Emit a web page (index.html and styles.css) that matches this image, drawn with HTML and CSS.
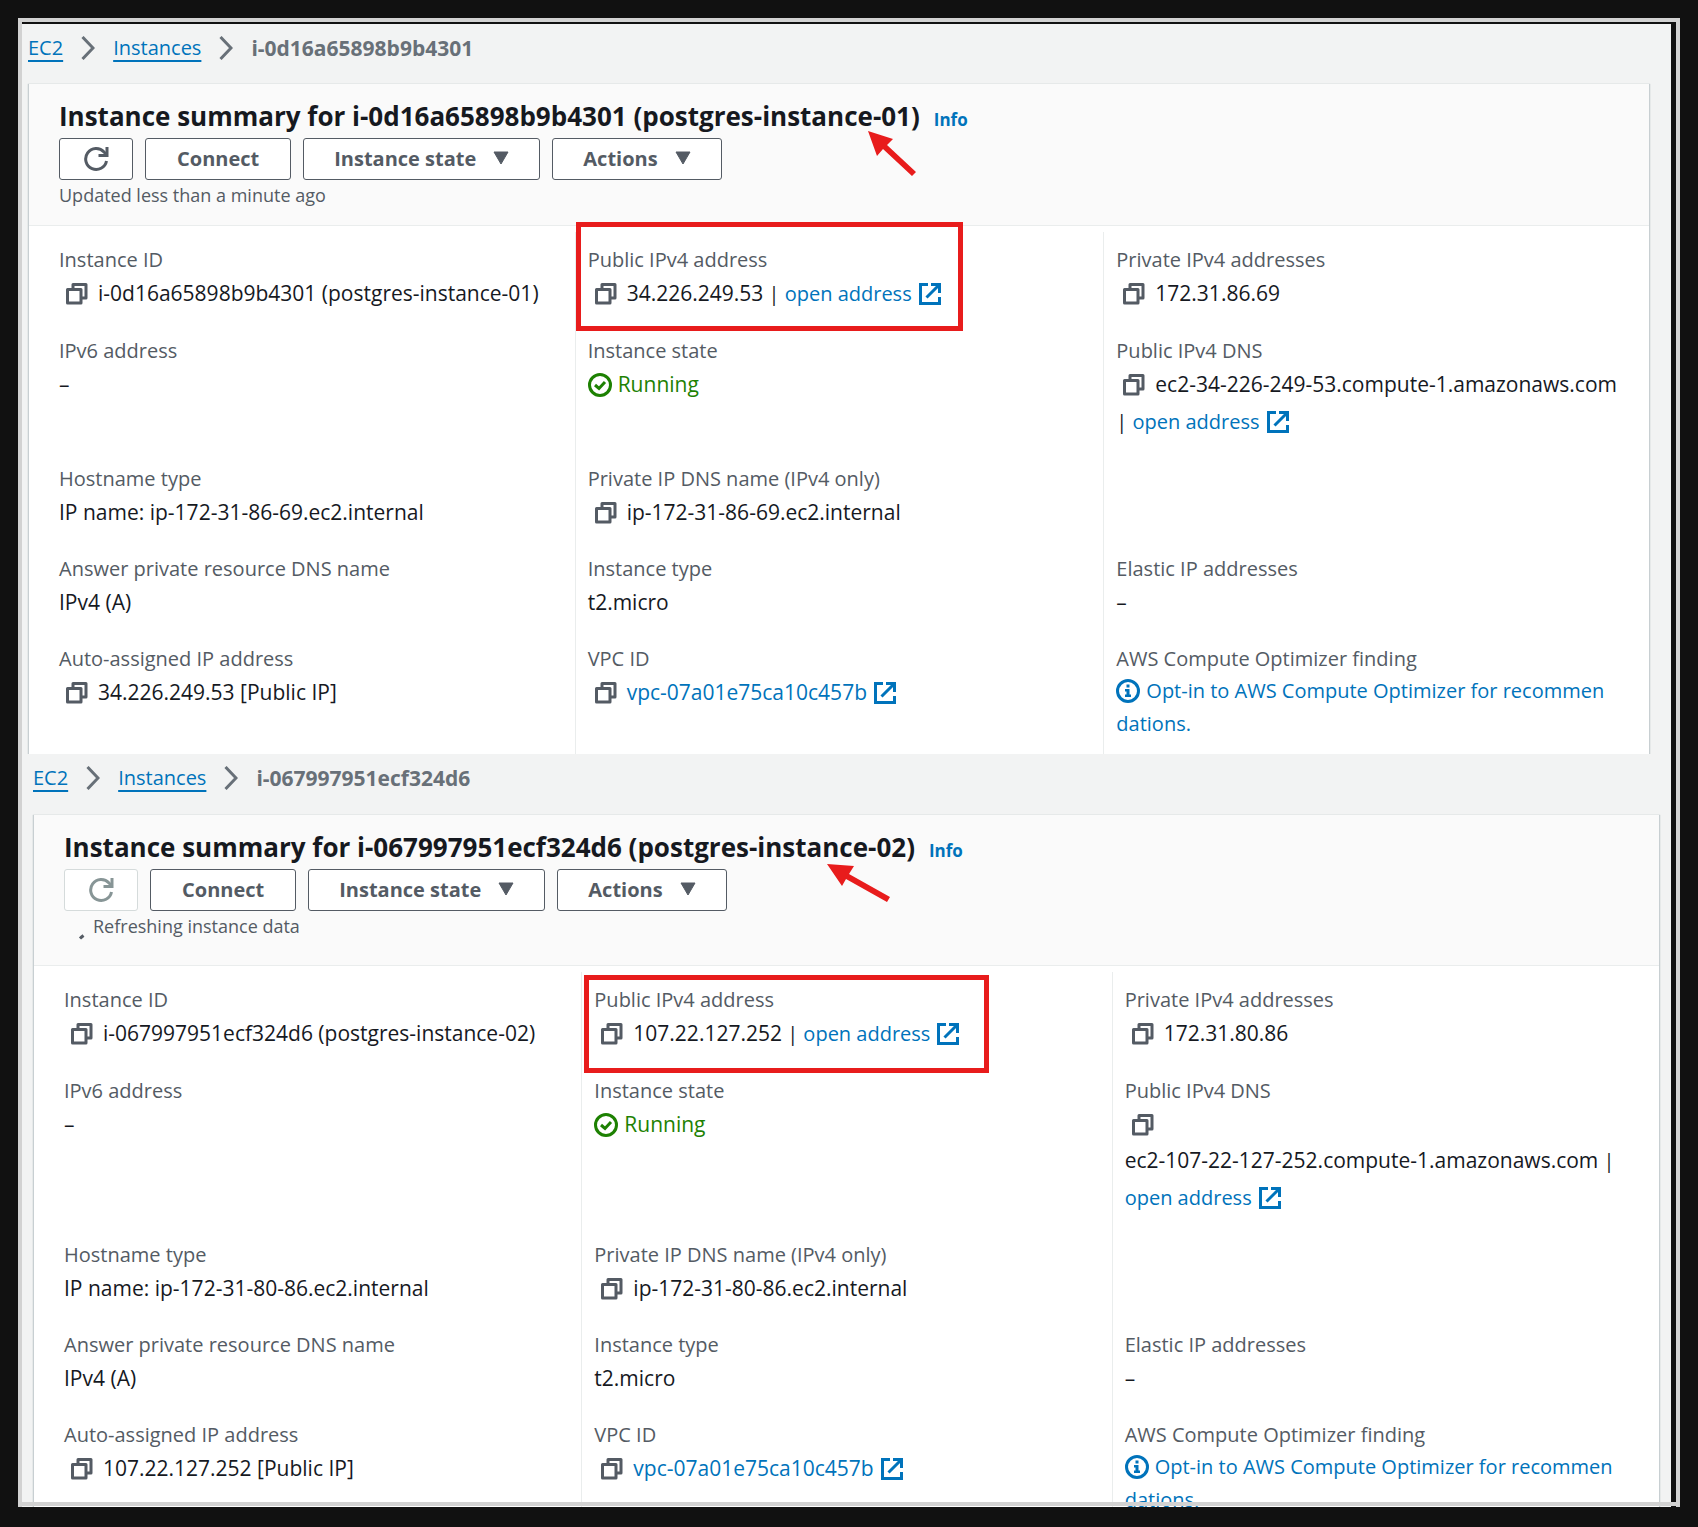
FILE: index.html
```html
<!DOCTYPE html>
<html lang="en">
<head>
<meta charset="utf-8">
<title>EC2 instance summaries</title>
<link rel="stylesheet" href="styles.css">
</head>
<body>
<svg class="sprite" aria-hidden="true">
  <symbol id="copy" viewBox="0 0 22 22"><path d="M1.5 6.5h13.5v13.5h-13.5zM7 6.5V1.5H20V15H15" fill="none" stroke="currentColor" stroke-width="3" stroke-linejoin="round"/></symbol>
  <symbol id="external" viewBox="0 0 22 22"><path d="M9 1.5H1.5V20.5H20.5V14M12 1.5H20.5V10M20 2L7.5 14.5" fill="none" stroke="currentColor" stroke-width="3"/></symbol>
  <symbol id="check" viewBox="0 0 24 24"><circle cx="12" cy="12" r="10.5" fill="none" stroke="currentColor" stroke-width="3"/><path d="M7 12l4 3.500 6-6.500" fill="none" stroke="currentColor" stroke-width="3"/></symbol>
  <symbol id="info" viewBox="0 0 24 24"><circle cx="12" cy="12" r="10.500" fill="none" stroke="currentColor" stroke-width="3"/><path d="M10.500 5.500h3v3h-3zM9 10h4.500v5.500H15V18H9v-2.500h1.500v-3H9z" fill="currentColor"/></symbol>
  <symbol id="refresh" viewBox="0 0 26 26"><path d="M23.500 15A10.500 10.500 0 1 1 21 6L23.500 8.500" fill="none" stroke="currentColor" stroke-width="3"/><path d="M24 1V9.500H15.500" fill="none" stroke="currentColor" stroke-width="3"/></symbol>
  <symbol id="chevron" viewBox="0 0 14 24"><path d="M1.500 1L12 12L1.500 23" fill="none" stroke="currentColor" stroke-width="3"/></symbol>
  <symbol id="caret" viewBox="0 0 16 14"><path d="M1 1H15L8 13z" fill="currentColor" stroke="currentColor" stroke-linejoin="round"/></symbol>
</svg>
<main class="frame">
  <section class="screen">
    <nav class="crumbs" aria-label="Breadcrumb">
      <a href="#">EC2</a>
      <svg class="chevron"><use href="#chevron"/></svg>
      <a href="#">Instances</a>
      <svg class="chevron"><use href="#chevron"/></svg>
      <span class="current">i-0d16a65898b9b4301</span>
    </nav>
    <article class="card">
      <header class="head">
        <div class="title"><h1>Instance summary for i-0d16a65898b9b4301 (postgres-instance-01)</h1><a href="#">Info</a></div>
        <div class="actions">
          <button class="btn icon-only" aria-label="Refresh"><svg class="refresh"><use href="#refresh"/></svg></button>
          <button class="btn connect">Connect</button>
          <button class="btn">Instance state <svg class="caret"><use href="#caret"/></svg></button>
          <button class="btn">Actions <svg class="caret"><use href="#caret"/></svg></button>
        </div>
        <p class="status">Updated less than a minute ago</p>
        <svg class="arrow arrow-one" viewBox="0 0 50 46"><path d="M0 0L25 8L19 14L48 41L44 45L15 18L9 25z" fill="#e81c1c"/></svg>
      </header>
      <dl class="details">
        <div class="cell"><dt>Instance ID</dt><dd><button class="copy" aria-label="Copy"><svg><use href="#copy"/></svg></button>i-0d16a65898b9b4301 (postgres-instance-01)</dd></div>
        <div class="cell"><dt>Public IPv4 address</dt><dd><button class="copy" aria-label="Copy"><svg><use href="#copy"/></svg></button>34.226.249.53<span class="bar"> | </span><a class="open" href="#">open address<svg class="ext"><use href="#external"/></svg></a></dd><span class="mark mark-one"></span></div>
        <div class="cell"><dt>Private IPv4 addresses</dt><dd><button class="copy" aria-label="Copy"><svg><use href="#copy"/></svg></button>172.31.86.69</dd></div>
        <div class="cell"><dt>IPv6 address</dt><dd>–</dd></div>
        <div class="cell"><dt>Instance state</dt><dd class="running"><svg class="state"><use href="#check"/></svg>Running</dd></div>
        <div class="cell"><dt>Public IPv4 DNS</dt><dd><button class="copy" aria-label="Copy"><svg><use href="#copy"/></svg></button><span class="host">ec2-34-226-249-53.compute-1.amazonaws.com</span><span class="bar"> | </span><a class="open" href="#">open address<svg class="ext"><use href="#external"/></svg></a></dd></div>
        <div class="cell"><dt>Hostname type</dt><dd>IP name: ip-172-31-86-69.ec2.internal</dd></div>
        <div class="cell"><dt>Private IP DNS name (IPv4 only)</dt><dd><button class="copy" aria-label="Copy"><svg><use href="#copy"/></svg></button>ip-172-31-86-69.ec2.internal</dd></div>
        <div class="cell"></div>
        <div class="cell"><dt>Answer private resource DNS name</dt><dd>IPv4 (A)</dd></div>
        <div class="cell"><dt>Instance type</dt><dd>t2.micro</dd></div>
        <div class="cell"><dt>Elastic IP addresses</dt><dd>–</dd></div>
        <div class="cell last"><dt>Auto-assigned IP address</dt><dd><button class="copy" aria-label="Copy"><svg><use href="#copy"/></svg></button>34.226.249.53 [Public IP]</dd></div>
        <div class="cell last"><dt>VPC ID</dt><dd><button class="copy" aria-label="Copy"><svg><use href="#copy"/></svg></button><a href="#">vpc-07a01e75ca10c457b<svg class="ext"><use href="#external"/></svg></a></dd></div>
        <div class="cell last"><dt>AWS Compute Optimizer finding</dt><dd class="finding"><a href="#"><svg class="state"><use href="#info"/></svg>Opt-in to AWS Compute Optimizer for recommen<wbr>dations.</a></dd></div>
      </dl>
    </article>
  </section>
  <section class="screen second">
    <nav class="crumbs" aria-label="Breadcrumb">
      <a href="#">EC2</a>
      <svg class="chevron"><use href="#chevron"/></svg>
      <a href="#">Instances</a>
      <svg class="chevron"><use href="#chevron"/></svg>
      <span class="current">i-067997951ecf324d6</span>
    </nav>
    <article class="card">
      <header class="head">
        <div class="title"><h1>Instance summary for i-067997951ecf324d6 (postgres-instance-02)</h1><a href="#">Info</a></div>
        <div class="actions">
          <button class="btn icon-only" aria-label="Refresh" disabled><svg class="refresh"><use href="#refresh"/></svg></button>
          <button class="btn connect">Connect</button>
          <button class="btn">Instance state <svg class="caret"><use href="#caret"/></svg></button>
          <button class="btn">Actions <svg class="caret"><use href="#caret"/></svg></button>
        </div>
        <p class="status"><svg class="spinner" viewBox="0 0 29 29"><path d="M16 26.500Q17.500 25 19.500 23.500" fill="none" stroke="currentColor" stroke-width="3"/></svg>Refreshing instance data</p>
        <svg class="arrow arrow-two" viewBox="0 0 65 38"><path d="M0 0L27 2L22 10L63 33L60 38L19 15L15 22z" fill="#e81c1c"/></svg>
      </header>
      <dl class="details">
        <div class="cell"><dt>Instance ID</dt><dd><button class="copy" aria-label="Copy"><svg><use href="#copy"/></svg></button>i-067997951ecf324d6 (postgres-instance-02)</dd></div>
        <div class="cell"><dt>Public IPv4 address</dt><dd><button class="copy" aria-label="Copy"><svg><use href="#copy"/></svg></button>107.22.127.252<span class="bar"> | </span><a class="open" href="#">open address<svg class="ext"><use href="#external"/></svg></a></dd><span class="mark mark-two"></span></div>
        <div class="cell"><dt>Private IPv4 addresses</dt><dd><button class="copy" aria-label="Copy"><svg><use href="#copy"/></svg></button>172.31.80.86</dd></div>
        <div class="cell"><dt>IPv6 address</dt><dd>–</dd></div>
        <div class="cell"><dt>Instance state</dt><dd class="running"><svg class="state"><use href="#check"/></svg>Running</dd></div>
        <div class="cell"><dt>Public IPv4 DNS</dt><dd><button class="copy" aria-label="Copy"><svg><use href="#copy"/></svg></button><span class="host">ec2-107-22-127-252.compute-1.amazonaws.com</span><span class="bar"> | </span><a class="open" href="#">open address<svg class="ext"><use href="#external"/></svg></a></dd></div>
        <div class="cell"><dt>Hostname type</dt><dd>IP name: ip-172-31-80-86.ec2.internal</dd></div>
        <div class="cell"><dt>Private IP DNS name (IPv4 only)</dt><dd><button class="copy" aria-label="Copy"><svg><use href="#copy"/></svg></button>ip-172-31-80-86.ec2.internal</dd></div>
        <div class="cell"></div>
        <div class="cell"><dt>Answer private resource DNS name</dt><dd>IPv4 (A)</dd></div>
        <div class="cell"><dt>Instance type</dt><dd>t2.micro</dd></div>
        <div class="cell"><dt>Elastic IP addresses</dt><dd>–</dd></div>
        <div class="cell last"><dt>Auto-assigned IP address</dt><dd><button class="copy" aria-label="Copy"><svg><use href="#copy"/></svg></button>107.22.127.252 [Public IP]</dd></div>
        <div class="cell last"><dt>VPC ID</dt><dd><button class="copy" aria-label="Copy"><svg><use href="#copy"/></svg></button><a href="#">vpc-07a01e75ca10c457b<svg class="ext"><use href="#external"/></svg></a></dd></div>
        <div class="cell last"><dt>AWS Compute Optimizer finding</dt><dd class="finding"><a href="#"><svg class="state"><use href="#info"/></svg>Opt-in to AWS Compute Optimizer for recommen<wbr>dations.</a></dd></div>
      </dl>
    </article>
  </section>
</main>
</body>
</html>
```
FILE: styles.css
```css
* { box-sizing: border-box; }

body {
  margin: 0;
  height: 100vh;
  padding: 18px 18px 20px;
  background: #111;
  color: #16191f;
  font: 21px/36px "Open Sans", "Noto Sans", sans-serif;
}

.sprite { display: none; }
h1, p, dl, dd { margin: 0; }
a { color: #0073bb; text-decoration: none; }
button { font-family: inherit; cursor: pointer; }

/* Device-like frame round both screens */
.frame {
  position: relative;
  height: 100%;
  overflow: hidden;
  padding: 2px 5px 0 0;
  border: 4px solid #d2d2d2;
  border-bottom: 0;
}
.frame::after {
  content: "";
  position: absolute;
  left: 0;
  right: 0;
  bottom: 1px;
  height: 4px;
  background: #d2d2d2;
}

.screen { padding: 0 21px 0 6px; background: #f2f3f3; }
.second { padding: 0 11px; }

.crumbs {
  display: flex;
  align-items: center;
  gap: 18px;
  height: 60px;
  padding-bottom: 13px;
  font-size: 20px;
}
.second .crumbs { height: 61px; }
.crumbs a {
  text-decoration: underline;
  text-decoration-thickness: 2px;
  text-underline-offset: 5px;
  text-decoration-skip-ink: none;
}
.crumbs .current { font-size: 21px; font-weight: 700; }
.crumbs .current, .chevron { color: #687078; }
.chevron { width: 14px; height: 24px; }

.card {
  background: #fff;
  border: solid #c8cfd2;
  border-width: 0 1px;
  box-shadow: 0 0 1px #aab7b8;
}

.head {
  position: relative;
  height: 142px;
  padding: 14px 30px 0;
  background: #fafafa;
  border-bottom: 1px solid #eaeded;
}
.second .head { height: 151px; }
.title { display: flex; align-items: baseline; gap: 14px; height: 40px; }
.title h1 { font-size: 26px; line-height: 36px; }
.title a { font-size: 17px; font-weight: 700; }

.actions { display: flex; gap: 12px; }
.btn {
  display: flex;
  align-items: center;
  gap: 17px;
  height: 42px;
  padding: 0 30px 2px;
  background: #fff;
  border: 1px solid #545b64;
  border-radius: 3px;
  color: #545b64;
  font-size: 20px;
  font-weight: 700;
}
.btn:disabled { border-color: #d5dbdb; color: #879596; }
.icon-only { padding: 0 23px; }
.connect { padding-inline: 31px; }
.refresh { width: 26px; height: 26px; }
.caret { width: 16px; height: 14px; }

.status {
  display: flex;
  align-items: center;
  height: 30px;
  color: #545b64;
  font-size: 18px;
}
.spinner { width: 29px; height: 29px; }

.details {
  display: grid;
  grid-template-columns: repeat(3, 1fr);
  padding: 6px 17px 0;
}
.cell {
  position: relative;
  padding: 13px 12px 11px;
  border-left: 1px solid #eaeded;
}
.cell:nth-child(3n + 1) { border-left-color: transparent; }
.last { padding-bottom: 14px; }
dt { color: #545b64; line-height: 30px; font-size: 20px; }
dd a { white-space: nowrap; }
dd .open, dd .bar { font-size: 20px; }
.finding { font-size: 20px; line-height: 33px; }
.finding a { white-space: normal; }
.host { white-space: nowrap; }
.running { color: #1d8102; }

.copy {
  width: 22px;
  height: 22px;
  margin: 0 10px 0 7px;
  padding: 0;
  border: 0;
  background: none;
  color: #545b64;
  vertical-align: -4px;
}
.copy svg { display: block; width: 22px; height: 22px; }
.ext { width: 22px; height: 22px; margin-left: 7px; vertical-align: -4px; }
.state { width: 24px; height: 24px; margin-right: 6px; vertical-align: -5px; }

/* Annotations drawn over the page */
.mark { position: absolute; border: 5px solid #e81c1c; }
.mark-one { left: 0; top: -10px; width: 387px; height: 109px; }
.mark-two { left: 2px; top: 3px; width: 405px; height: 98px; z-index: 1; }
.arrow { position: absolute; }
.arrow-one { left: 839px; top: 47px; width: 50px; height: 46px; }
.arrow-two { left: 793px; top: 49px; width: 65px; height: 38px; }
```
